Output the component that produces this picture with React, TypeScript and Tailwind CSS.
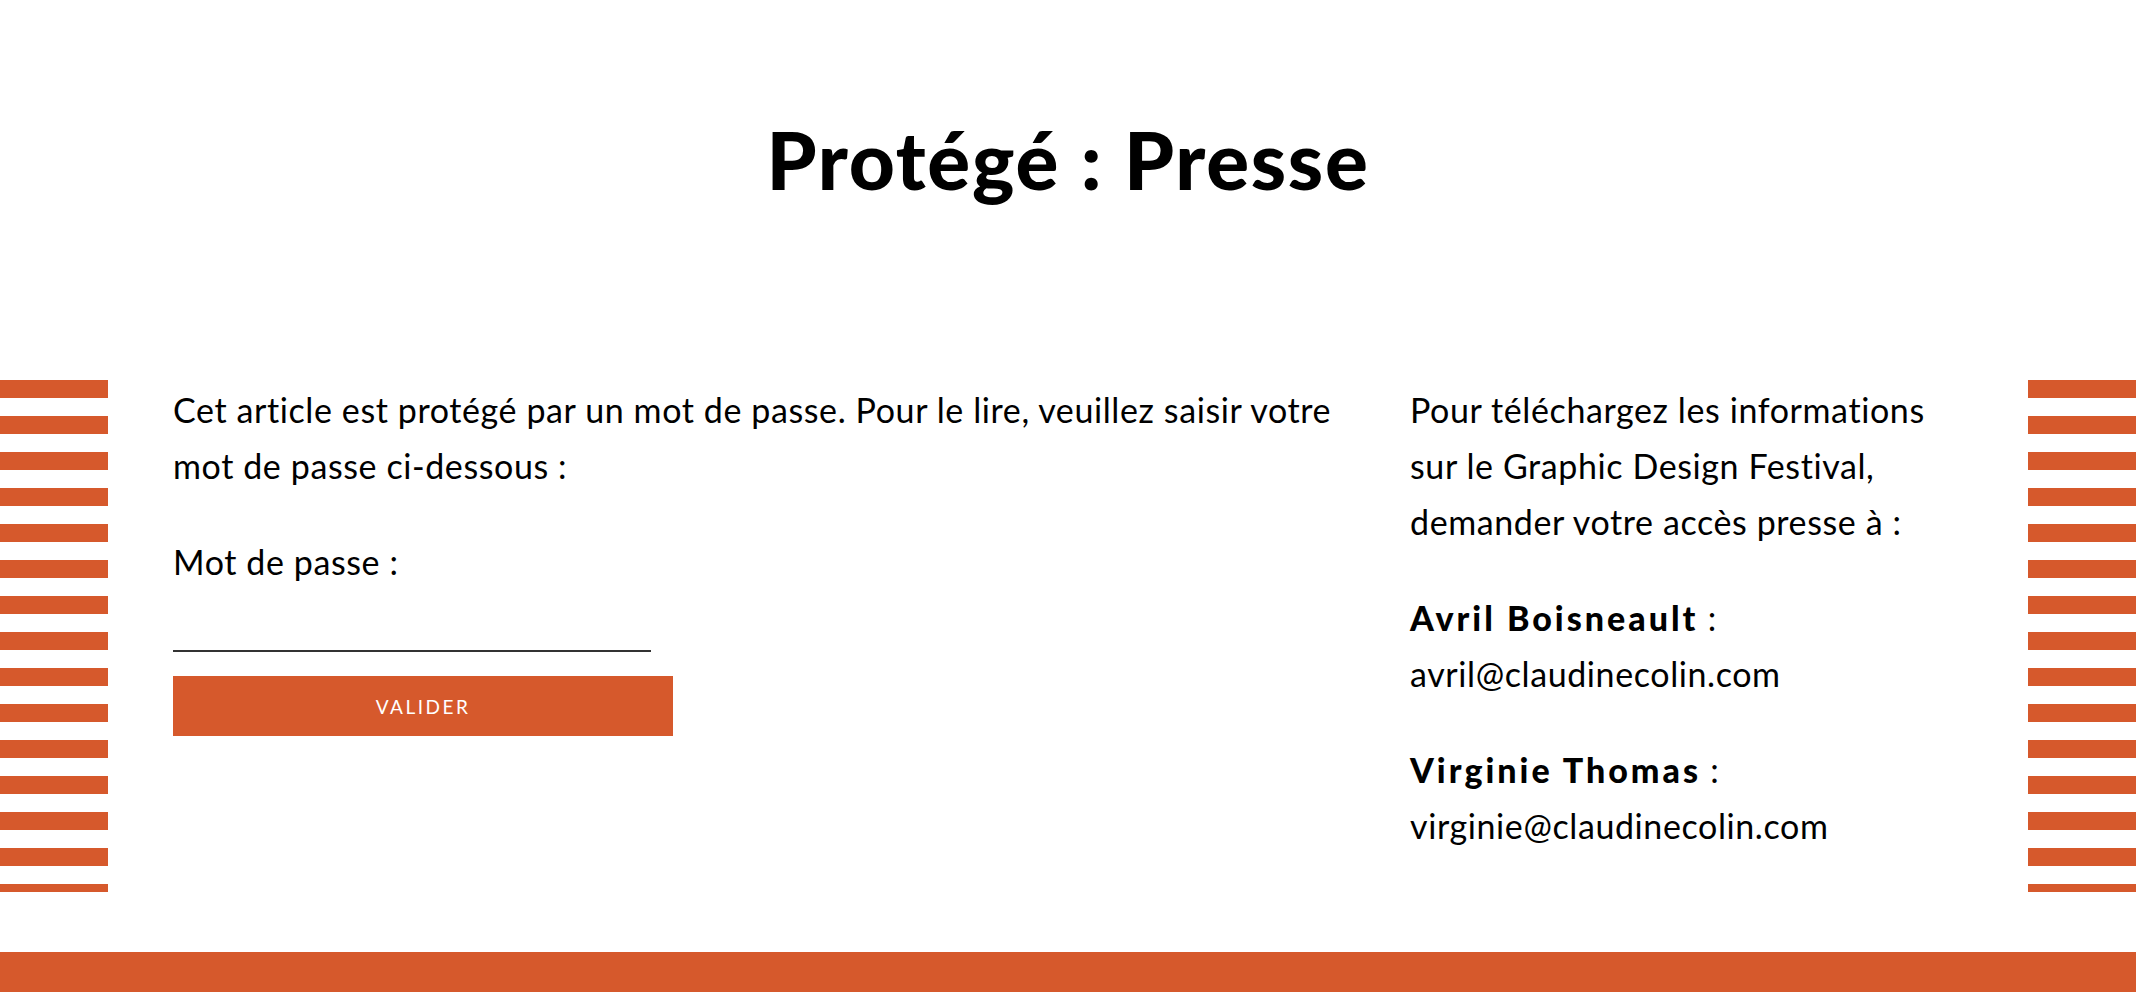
const stripes = Array.from({ length: 15 });

function Stripes() {
  return (
    <div className="flex h-[512px] w-[108px] shrink-0 flex-col gap-[18px] overflow-hidden">
      {stripes.map((_, i) => (
        <div key={i} className="h-[18px] w-full shrink-0 bg-[#d6592c]" />
      ))}
    </div>
  );
}

export default function App() {
  return (
    <div className="min-h-screen bg-white font-['Lato',sans-serif] text-black">
      <header className="h-[380px] pt-[119px]">
        <h1 className="text-center text-[80px] font-black leading-none tracking-[1.7px]">Protégé : Presse</h1>
      </header>

      <section className="flex h-[512px] justify-between">
        <Stripes />
        <div className="flex flex-1 gap-[57px] px-[65px] pt-[2px] text-[34px] leading-[56px] tracking-[0.6px]">
          <form className="flex-1" onSubmit={(e) => e.preventDefault()}>
            <p className="mb-[40px] whitespace-nowrap">
              Cet article est protégé par un mot de passe. Pour le lire, veuillez saisir votre
              <br />
              mot de passe ci-dessous :
            </p>
            <label htmlFor="pwd" className="block">
              Mot de passe :
            </label>
            <input
              id="pwd"
              type="password"
              className="mt-[22px] block h-[40px] w-[478px] border-b-2 border-[#333] outline-none"
            />
            <button
              type="submit"
              className="mt-[24px] block h-[60px] w-[500px] bg-[#d6592c] text-[19px] leading-none tracking-[2.5px] text-white uppercase"
            >
              Valider
            </button>
          </form>

          <div className="w-[553px] shrink-0 whitespace-nowrap">
            <p className="mb-[40px]">
              Pour téléchargez les informations
              <br />
              sur le Graphic Design Festival,
              <br />
              demander votre accès presse à :
            </p>
            <p className="mb-[40px]">
              <strong className="font-black tracking-[3px]">Avril Boisneault</strong> :
              <br />
              avril@claudinecolin.com
            </p>
            <p>
              <strong className="font-black tracking-[3px]">Virginie Thomas</strong> :
              <br />
              virginie@claudinecolin.com
            </p>
          </div>
        </div>
        <Stripes />
      </section>

      <div className="h-[60px]" />
      <footer className="h-[40px] bg-[#d6592c]" />
    </div>
  );
}
